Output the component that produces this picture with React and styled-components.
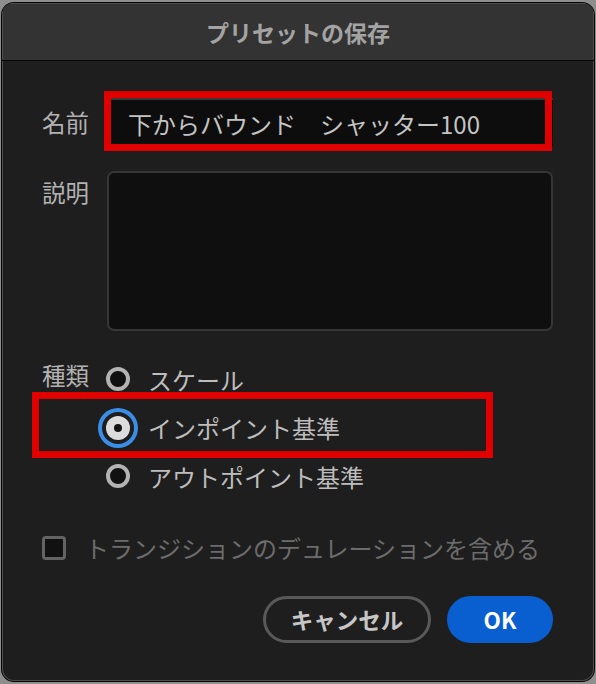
import React from "react";
import styled, { createGlobalStyle } from "styled-components";

const GlobalStyle = createGlobalStyle`
  html, body {
    margin: 0;
    padding: 0;
    background: #8e8e8e;
  }
  body {
    font-family: "Noto Sans CJK JP", "Noto Sans", sans-serif;
  }
`;

const Window = styled.div`
  width: 592px;
  height: 678px;
  margin: 3px 2px;
  background: #1e1e1e;
  border-radius: 12px;
  box-shadow: 0 0 0 1px #050505, inset 0 0 0 1px #4e4e4e;
  overflow: hidden;
  display: flex;
  flex-direction: column;
`;

const TitleBar = styled.div`
  height: 57px;
  flex-shrink: 0;
  background: #333333;
  border-bottom: 1px solid #080808;
  display: flex;
  align-items: center;
  justify-content: center;
  color: #a3a3a3;
  font-size: 23px;
  font-weight: 700;
  box-shadow: inset 0 1px 0 #4e4e4e, inset 1px 0 0 #4e4e4e, inset -1px 0 0 #4e4e4e;
`;

const Content = styled.div`
  padding: 0 41px 0 40px;
  display: flex;
  flex-direction: column;
`;

const Row = styled.div`
  display: grid;
  grid-template-columns: 65px 446px;
  margin-top: ${(p) => p.$top}px;
  align-items: ${(p) => (p.$center ? "center" : "start")};
`;

const Label = styled.div`
  color: #b2b2b2;
  font-size: 23.5px;
  line-height: ${(p) => p.$lh || 48}px;
  padding-top: ${(p) => p.$pt || 0}px;
`;

const Field = styled.div`
  position: relative;
  height: 48px;
  background: #0d0d0d;
  border-top: 2px solid #383838;
  box-sizing: border-box;
  display: flex;
  align-items: center;
  padding-left: 21px;
  color: #c4c4c4;
  font-size: 24px;
  white-space: pre;
`;

const Highlight = styled.div`
  position: absolute;
  top: ${(p) => p.$t}px;
  left: ${(p) => p.$l}px;
  width: ${(p) => p.$w}px;
  height: ${(p) => p.$h}px;
  border: 7px solid #e00000;
  box-sizing: border-box;
  pointer-events: none;
`;

const TextArea = styled.div`
  height: 160px;
  background: #0f0f0f;
  border: 2px solid #363636;
  border-radius: 7px;
  box-sizing: border-box;
`;

const RadioList = styled.div`
  display: flex;
  flex-direction: column;
`;

const RadioRow = styled.div`
  position: relative;
  height: 48.5px;
  display: flex;
  align-items: center;
  gap: 18px;
  margin-left: -1px;
  color: #bdbdbd;
  font-size: 24px;
`;

const RadioDot = styled.span`
  width: 24px;
  height: 24px;
  border-radius: 50%;
  box-sizing: border-box;
  flex-shrink: 0;
  border: ${(p) => (p.$on ? "none" : "4px solid #b3b3b3")};
  background: ${(p) => (p.$on ? "#dcdcdc" : "#111")};
  box-shadow: ${(p) =>
    p.$on ? "0 0 0 4px #1e1e1e, 0 0 0 8px #3a8ee6" : "none"};
  display: flex;
  align-items: center;
  justify-content: center;
  &::after {
    content: "";
    display: ${(p) => (p.$on ? "block" : "none")};
    width: 8px;
    height: 8px;
    border-radius: 50%;
    background: #141414;
  }
`;

const CheckRow = styled.div`
  display: flex;
  align-items: center;
  gap: 19px;
  margin-top: 35px;
  height: 24px;
  color: #6c6c6c;
  font-size: 24px;
`;

const CheckBox = styled.span`
  width: 24px;
  height: 24px;
  box-sizing: border-box;
  border: 3px solid #636363;
  border-radius: 4px;
  background: #111;
  flex-shrink: 0;
`;

const Buttons = styled.div`
  display: flex;
  justify-content: flex-end;
  gap: 16px;
  margin-top: 36px;
`;

const Button = styled.button`
  height: 47px;
  width: ${(p) => (p.$primary ? 106 : 168)}px;
  border-radius: 24px;
  box-sizing: border-box;
  border: ${(p) => (p.$primary ? "none" : "3px solid #595959")};
  background: ${(p) => (p.$primary ? "#0a5fd0" : "transparent")};
  color: ${(p) => (p.$primary ? "#ffffff" : "#c6c6c6")};
  font-family: "Noto Sans CJK JP", "Noto Sans", sans-serif;
  font-size: 22.5px;
  font-weight: 700;
  padding: 0;
  display: flex;
  align-items: center;
  justify-content: center;
`;

const options = [
  { label: "スケール", on: false },
  { label: "インポイント基準", on: true },
  { label: "アウトポイント基準", on: false },
];

export default function App() {
  return (
    <>
      <GlobalStyle />
      <Window>
        <TitleBar>プリセットの保存</TitleBar>
        <Content>
          <Row $top={37} $center>
            <Label>名前</Label>
            <Field>
              下からバウンド　シャッター100
              <Highlight $t={-9} $l={-3} $w={448} $h={60} />
            </Field>
          </Row>
          <Row $top={25}>
            <Label $lh={34} $pt={4}>説明</Label>
            <TextArea />
          </Row>
          <Row $top={24}>
            <Label $lh={40}>種類</Label>
            <RadioList>
              {options.map((o) => (
                <RadioRow key={o.label}>
                  <RadioDot $on={o.on} />
                  {o.label}
                  {o.on && <Highlight $t={-12} $l={-74} $w={461} $h={66} />}
                </RadioRow>
              ))}
            </RadioList>
          </Row>
          <CheckRow>
            <CheckBox />
            トランジションのデュレーションを含める
          </CheckRow>
          <Buttons>
            <Button>キャンセル</Button>
            <Button $primary>OK</Button>
          </Buttons>
        </Content>
      </Window>
    </>
  );
}
